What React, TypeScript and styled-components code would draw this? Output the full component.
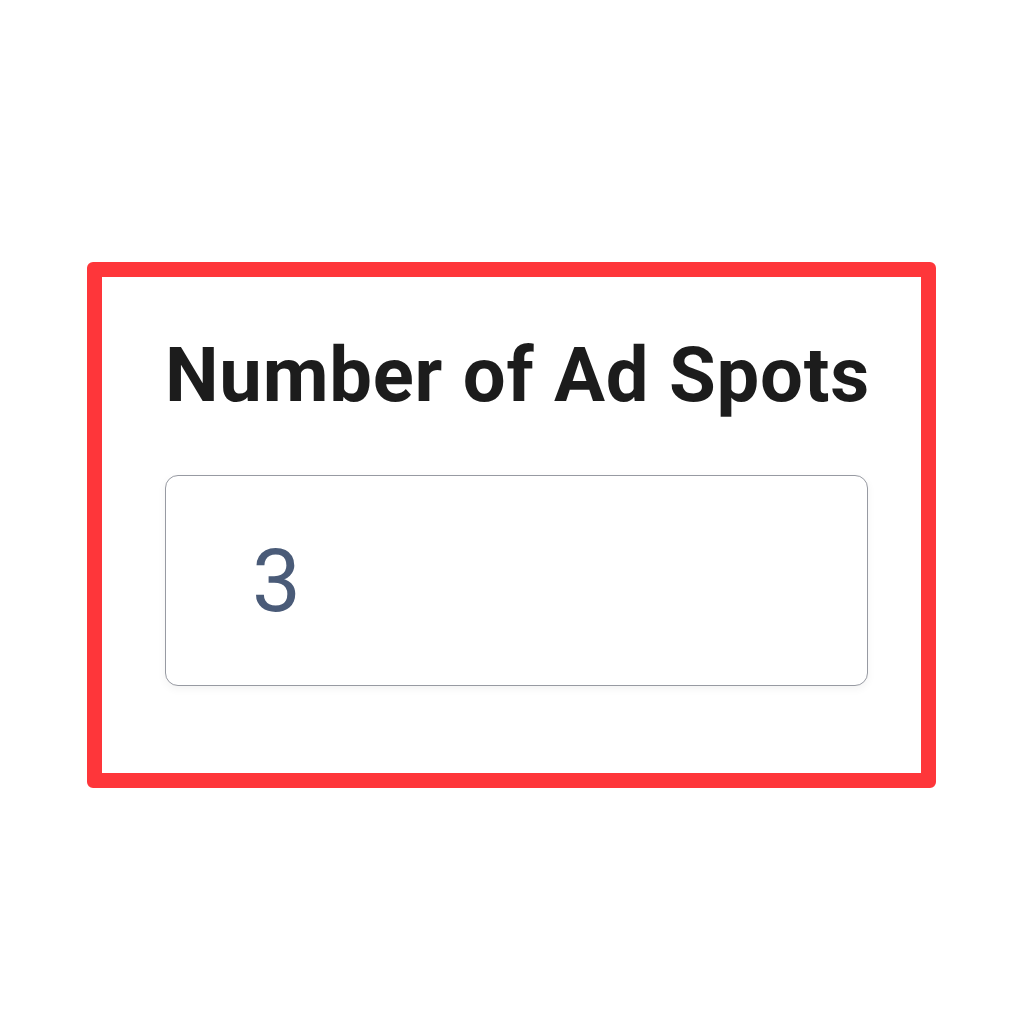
import styled, { createGlobalStyle } from 'styled-components';

const GlobalStyle = createGlobalStyle`
  html, body {
    margin: 0;
    padding: 0;
    background: #ffffff;
    font-family: Roboto, "Liberation Sans", sans-serif;
  }
`;

const Page = styled.div`
  width: 1024px;
  height: 1024px;
  padding: 262px 0 0 87px;
  box-sizing: border-box;
`;

const Frame = styled.div`
  width: 849px;
  height: 526px;
  box-sizing: border-box;
  border: 15px solid #fe363a;
  border-radius: 6px;
  padding: 54px 53px 0 63px;
  display: flex;
  flex-direction: column;
`;

const Title = styled.h2`
  margin: 0;
  font-size: 76px;
  line-height: 89px;
  font-weight: 700;
  color: #1c1c1c;
  letter-spacing: 0.75px;
  white-space: nowrap;
`;

const Field = styled.input`
  margin-top: 55px;
  width: 703px;
  height: 211px;
  box-sizing: border-box;
  border: 1.5px solid #979aa2;
  border-radius: 13px;
  padding: 0 0 0 86px;
  font-family: Roboto, "Liberation Sans", sans-serif;
  font-size: 87px;
  color: #4a5b78;
  background: #fff;
  box-shadow: 0 3px 8px rgba(0, 0, 0, 0.05);
  outline: none;
`;

export default function App() {
  return (
    <Page>
      <GlobalStyle />
      <Frame>
        <Title>Number of Ad Spots</Title>
        <Field type="text" defaultValue="3" />
      </Frame>
    </Page>
  );
}
